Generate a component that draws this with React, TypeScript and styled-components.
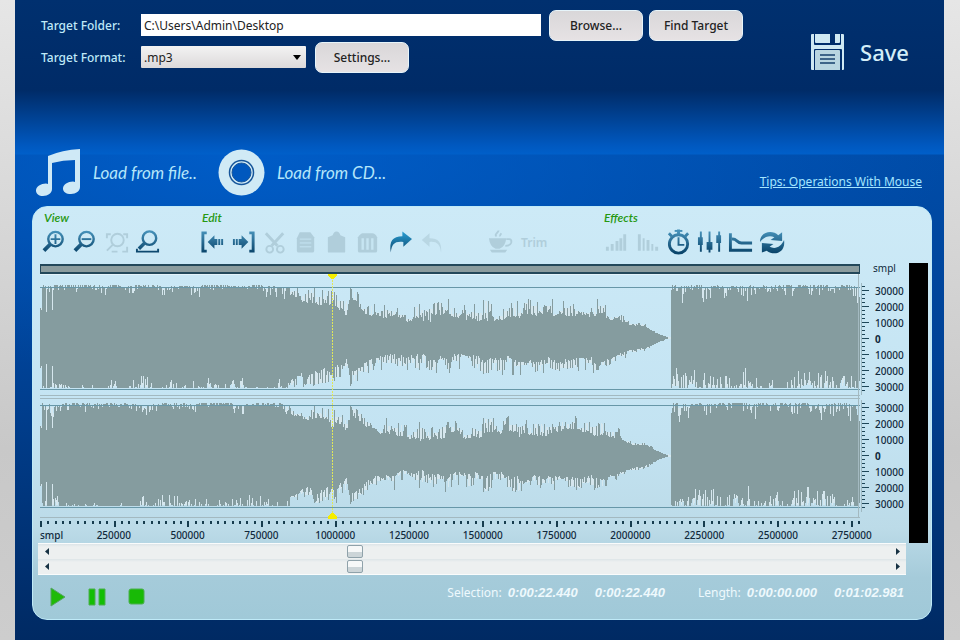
import React from 'react';
import styled, { createGlobalStyle } from 'styled-components';

const GlobalStyle = createGlobalStyle`
  * { box-sizing: border-box; }
  body {
    margin: 0;
    background: linear-gradient(#e6e6e6, #c8c8c8 70%, #cdcdcd);
    font-family: "Noto Sans", "Open Sans", sans-serif;
    font-size: 12px;
    color: #10293c;
  }
  button, input, select { font: inherit; color: inherit; margin: 0; }
  button { border: 0; padding: 0; background: none; cursor: pointer; }
  button:disabled { cursor: default; }
  svg { display: block; }
`;

const Window = styled.main`
  min-height: 100vh;
  margin: 0 16px 0 15px;
  padding: 9px 12px 20px 17px;
  background:
    linear-gradient(#00306f 0, #002b67 90px, #0058bf 145px, #005fc9 154px, transparent 155px),
    radial-gradient(700px 220px at 25% 155px, rgba(0, 98, 210, 0.75), transparent),
    linear-gradient(#004ca8 155px, #004296 360px, #002d6a 600px, #002a63);
`;

const Header = styled.header`
  display: flex;
  justify-content: space-between;
  padding: 0 23px 0 9px;
  height: 139px;
`;

const TargetForm = styled.form`
  display: grid;
  grid-template-columns: 94px 1fr;
  grid-auto-rows: 32px;
  align-items: center;
  flex: 0 1 702px;
  column-gap: 6px;
`;

const Label = styled.label`
  color: #bfe9f8;
  font-weight: 500;
`;

const FieldRow = styled.div`
  display: flex;
  align-items: center;
  gap: 6px;
  min-width: 0;
`;

const FolderInput = styled.input`
  flex: 1;
  min-width: 0;
  height: 22px;
  margin-right: 2px;
  padding: 0 3px;
  border: 0;
  background: #fff;
  color: #222;
`;

const SelectFrame = styled.span`
  display: grid;
  grid-template-areas: "stack";
  align-items: center;
  width: 165px;
  margin-right: 3px;
  svg { grid-area: stack; justify-self: end; margin-right: 5px; pointer-events: none; }
`;

const FormatSelect = styled.select`
  grid-area: stack;
  appearance: none;
  height: 22px;
  padding: 0 3px;
  border: 0;
  border-radius: 1px;
  background: linear-gradient(#f3f3f3, #dcd9da);
  color: #222;
`;

const PushButton = styled.button`
  width: 94px;
  height: 31px;
  border: 1px solid #e6f4fa;
  border-radius: 7px;
  background: linear-gradient(#d9d7d9, #e6e2e4);
  color: #222;
  font-weight: 500;
`;

const SaveButton = styled.button`
  display: flex;
  align-items: center;
  align-self: flex-start;
  gap: 15px;
  margin-top: 24px;
  color: #d3eef8;
  font-size: 22px;
  line-height: 36px;
  font-weight: 500;
`;

const SourceBar = styled.nav`
  display: flex;
  align-items: center;
  height: 48px;
  margin-bottom: 10px;
  padding: 0 10px 0 4px;
`;

const SourceButton = styled.button`
  display: flex;
  align-items: center;
  gap: 12px;
  margin-right: 21px;
  color: #b4e6fa;
  font-family: Lato, "Noto Sans", sans-serif;
  font-size: 17px;
  font-style: italic;
`;

const TipsLink = styled.a`
  margin: 18px 0 0 auto;
  color: #a5e6ff;
`;

const Panel = styled.section`
  padding: 5px 3px 9px 6px;
  border: 1px solid #bfeaf8;
  border-radius: 15px;
  background: linear-gradient(#cdeaf7, #c3e3f2 55%, #bcdbe8 78%, #a5cbda 90%, #a0c9d8);
`;

const Toolbar = styled.div`
  display: flex;
  height: 51px;
`;

const ToolGroup = styled.div<{ $span: number }>`
  flex: ${p => p.$span} 0 0;
  min-width: 0;
`;

const GroupTitle = styled.h2`
  margin: 0 0 0 5px;
  color: #269812;
  font-family: Lato, "Noto Sans", sans-serif;
  font-size: 12px;
  line-height: 12px;
  height: 14px;
  font-style: italic;
  font-weight: 600;
`;

const Tools = styled.div<{ $inset?: number }>`
  display: flex;
  align-items: center;
  height: 32px;
  padding-left: ${p => p.$inset ?? 0}px;
`;

const ToolButton = styled.button`
  display: flex;
  align-items: center;
  justify-content: center;
  gap: 8px;
  min-width: 31px;
  height: 30px;
  font-weight: 600;
  &:disabled { color: #b0cedb; }
`;

const TrimButton = styled(ToolButton)`
  margin-left: 42px;
`;

const Editor = styled.div`
  display: flex;
  justify-content: space-between;
  gap: 3px;
`;

const EditorMain = styled.div`
  flex: 1;
  min-width: 0;
`;

const Meter = styled.div`
  width: 19px;
  height: 280px;
  background: #000;
`;

const Tracks = styled.div`
  display: grid;
  grid-template-columns: 1fr 46px;
  padding-left: 1px;
`;

const Overview = styled.div`
  height: 10px;
  margin: 1px 0 0;
  border: 1px solid #23485a;
  border-width: 2px 1px;
  background: #8b9c9e;
`;

const AxisUnit = styled.span`
  padding-left: 13px;
  font-size: 10px;
  line-height: 11px;
`;

const Waves = styled.div`
  height: 245px;
`;

const Axes = styled.div`
  display: flex;
  flex-direction: column;
  gap: 5px;
  padding-top: 9px;
`;

const Axis = styled.div`
  display: flex;
  gap: 6px;
  height: 112px;
`;

const AxisLabels = styled.ol`
  list-style: none;
  margin: 0;
  padding: 0;
  font-size: 10px;
  line-height: 16px;
  font-weight: 500;
`;

const TimeRuler = styled.div`
  margin-right: 46px;
  height: 24px;
  padding-left: 1px;
`;

const TimeLabels = styled.div`
  display: flex;
  font-size: 10px;
  line-height: 14px;
  font-weight: 500;
`;

const TimeUnit = styled.span`
  flex: 0 0 4.5%;
  min-width: 0;
  white-space: nowrap;
`;

const TimeLabel = styled.span`
  flex: 0 0 9%;
  min-width: 0;
  text-align: center;
  white-space: nowrap;
`;

const Scrollers = styled.div`
  margin-left: -1px;
  height: 32px;
  padding: 1px 0;
  background: #fafcfc;
`;

const Scroller = styled.div`
  display: flex;
  align-items: center;
  height: 15px;
  background: linear-gradient(#dde5e8, #edf0f0 3px, #edf0f0);
`;

const ScrollArrow = styled.button`
  display: flex;
  justify-content: center;
  flex: 0 0 17px;
  color: #173243;
`;

const ScrollRange = styled.input`
  flex: 1;
  min-width: 0;
  height: 15px;
  appearance: none;
  background: none;
  &::-webkit-slider-thumb {
    appearance: none;
    width: 16px;
    height: 13px;
    border: 1px solid #8fa2aa;
    border-radius: 2px;
    background: linear-gradient(#f6f8f8 50%, #ccd5d8 55%);
  }
`;

const Footer = styled.footer`
  display: flex;
  align-items: center;
  justify-content: space-between;
  height: 35px;
  padding: 0 24px 0 11px;
`;

const Transport = styled.div`
  display: flex;
  align-items: center;
  gap: 22px;
  height: 32px;
  padding-top: 8px;
`;

const Status = styled.div`
  display: flex;
  gap: 33px;
  color: #eef9fd;
`;

const StatusItem = styled.div`
  display: flex;
  align-items: baseline;
  white-space: nowrap;
`;

const StatusName = styled.span`
  margin-right: 6px;
  font-size: 12px;
`;

const Timecode = styled.output`
  font-family: "Liberation Sans", Arial, sans-serif;
  font-size: 13px;
  font-weight: 700;
  font-style: italic;
  & + & { margin-left: 17px; }
`;

const FloppyIcon = () => (
  <svg width="35" height="38" viewBox="0 0 35 38" aria-hidden="true">
    <path fill="#cfe9f3" d="M1 2q0-1 1-1h2v10q0 1 1 1h25q1 0 1-1V1h2q1 0 1 1v34q0 1-1 1h-1V17q0-1-1-1H5q-1 0-1 1v20H2q-1 0-1-1z" />
    <path fill="#cfe9f3" d="M5 1h15v9H6q-1 0-1-1zM25 1h5v8q0 1-1 1h-4z" />
    <path fill="#b9d6e1" d="M5 18q0-1 1-1h23q1 0 1 1v19H5z" />
    <path stroke="#16406c" strokeWidth="1.4" d="M10 22h15M10 26h15M10 30h15" />
  </svg>
);

const NoteIcon = () => (
  <svg width="45" height="48" viewBox="0 0 45 48" aria-hidden="true">
    <path fill="#cfe9f6" d="M12 8q14-6 32-7v38c0 4-4 7-9 7-5 0-8-2-8-5.500 0-4 5-7 10-7l2 .5V12q-12 0-23 3v26c0 4-4 7-9 7-4 0-7-2-7-5.500 0-4 5-7 10-7l2 .5z" />
  </svg>
);

const DiscIcon = () => (
  <svg width="47" height="47" viewBox="0 0 47 47" aria-hidden="true">
    <circle cx="23.500" cy="23.500" r="23" fill="#d0eaf5" />
    <circle cx="23.500" cy="23.500" r="12" fill="none" stroke="#15559a" strokeWidth="1.500" />
    <circle cx="23.500" cy="23.500" r="9.500" fill="#0058be" stroke="#15559a" />
  </svg>
);

type IconName =
  | 'zoomIn' | 'zoomOut' | 'zoomSelection' | 'zoomAll' | 'markStart' | 'markEnd' | 'cut' | 'copy'
  | 'paste' | 'delete' | 'redo' | 'undo' | 'cup' | 'fadeIn' | 'fadeOut' | 'timer' | 'mixer' | 'curve' | 'loop';

const lens = (ink: string) => (
  <>
    <circle cx="14" cy="10" r="7.500" fill="#cfeaf5" stroke={ink} strokeWidth="2.500" />
    <path d="M9 15l-7 7" stroke={ink} strokeWidth="4" />
  </>
);

const ICONS: Record<IconName, (ink: string) => React.ReactNode> = {
  zoomIn: ink => <>{lens(ink)}<path fill={ink} d="M13 5h2v4h4v2h-4v4h-2v-4H9V9h4z" /></>,
  zoomOut: ink => <>{lens(ink)}<path fill={ink} d="M9 9h10v2H9z" /></>,
  zoomSelection: ink => (
    <g fill="none" stroke={ink} strokeWidth="2">
      <circle cx="14" cy="11" r="6.500" />
      <path d="M9 16l-6 6M3 9V5h4M20 5h4v4M24 18v5h-5M8 23h6" />
    </g>
  ),
  zoomAll: ink => (
    <g fill="none" stroke={ink}>
      <circle cx="15" cy="9" r="7" strokeWidth="2.500" />
      <path d="M10 14l-6 6" strokeWidth="3.500" />
      <path d="M2 20v3h22v-3" strokeWidth="2" />
    </g>
  ),
  markStart: ink => (
    <>
      <path d="M7 3.500H3v19h4" fill="none" stroke={ink} strokeWidth="3" />
      <path fill={ink} d="M8 13l7-7v4h3v6h-3v4zM19 10h2v6h-2zM22 10h2v6h-2z" />
    </>
  ),
  markEnd: ink => (
    <>
      <path d="M19 3.500h4v19h-4" fill="none" stroke={ink} strokeWidth="3" />
      <path fill={ink} d="M18 13l-7-7v4H8v6h3v4zM5 10h2v6H5zM2 10h2v6H2z" />
    </>
  ),
  cut: ink => (
    <g fill="none" stroke={ink} strokeWidth="2">
      <path d="M4 4l12 13M22 4L10 17" strokeWidth="3" />
      <circle cx="8" cy="20.500" r="3.500" /><circle cx="19" cy="20.500" r="3.500" />
    </g>
  ),
  copy: ink => (
    <>
      <path fill={ink} d="M7 3h11l4 5v14q0 2-2 2H6q-2 0-2-2V9z" />
      <path d="M7 10h12M7 14h12M7 18h12" stroke="#c6e5f2" />
    </>
  ),
  paste: ink => <path fill={ink} d="M4 8l5-2q1-4 4-4t4 4l5 2v15q0 1-1 1H5q-1 0-1-1z" />,
  delete: ink => (
    <>
      <path fill={ink} d="M3 8q3-4 5-4h10q3 0 5 4v14q0 2-2 2H5q-2 0-2-2z" />
      <path d="M8 9v12M13 9v12M18 9v12" stroke="#c6e5f2" strokeWidth="2.500" />
    </>
  ),
  redo: ink => <path fill={ink} d="M5 24C3 12 7 7 17 7V2l10 8-9 8v-5C9 12 6 15 5 24z" />,
  undo: ink => <path fill={ink} opacity=".7" d="M25 24C26 13 22 9 13 9V4L5 11l8 7v-5c7-1 11 2 12 11z" />,
  cup: ink => (
    <>
      <path fill={ink} d="M2 9h18q-1 9-7 11H9Q3 18 2 9zM3 21h18l-2 3H5z" />
      <path d="M20 10h3q3 0 2 4-1 3-6 3M10 7q-2-1 0-3t2-3M14 7q-1-1 1-3" fill="none" stroke={ink} strokeWidth="2" />
    </>
  ),
  fadeIn: ink => <path fill={ink} d="M2 18h3v4H2zM7 15h3v7H7zM12 12h3v10h-3zM16 9h3v13h-3zM20 5h3v17h-3z" />,
  fadeOut: ink => <path fill={ink} d="M3 5h3v17H3zM8 9h2v13H8zM12 11h3v11h-3zM17 15h2v7h-2zM21 18h3v4h-3z" />,
  timer: ink => (
    <g fill="none" stroke={ink}>
      <circle cx="13" cy="15" r="9.500" strokeWidth="3" />
      <path d="M13 8v8h6" strokeWidth="2" />
      <path d="M13 0v5M3 4l3 3M23 4l-3 3" strokeWidth="3" />
      <path d="M9 1.500h8" strokeWidth="2" />
    </g>
  ),
  mixer: ink => (
    <path fill={ink} d="M3 2h2v6h1v8H5v7H3v-7H1V8h2zM12 2h2v11h2v8h-2v3h-2v-3h-2v-8h2zM22 2h2v4h1v8h-1v9h-2v-9h-2V6h2z" />
  ),
  curve: ink => (
    <g fill="none" stroke={ink} strokeWidth="3">
      <path d="M2.500 4v17.500H25" />
      <path d="M4 10c5-1 5 4 10 4h11" />
    </g>
  ),
  loop: ink => (
    <path fill={ink} d="M1 13C1 2 14 0 20 6l4-3v9l-12-1 4-3C11 6 6 7 1 13zM26 11c2 13-10 17-18 11l-5 2V14l12 1-4 3c6 3 12 0 15-7z" />
  ),
};

const ToolIcon = ({ name, muted }: { name: IconName; muted?: boolean }) => (
  <svg width="26" height="26" viewBox="0 0 27 26" aria-hidden="true">
    <defs>
      <linearGradient id={`ink-${name}`} gradientUnits="userSpaceOnUse" x1="0" y1="2" x2="0" y2="24">
        <stop offset="0" stopColor={name === 'redo' ? '#2b9fd4' : '#4590b8'} />
        <stop offset="1" stopColor="#0a456b" />
      </linearGradient>
    </defs>
    {ICONS[name](muted ? 'currentColor' : `url(#ink-${name})`)}
  </svg>
);

type Tool = { icon: IconName; label: string; disabled?: boolean };

const VIEW_TOOLS: Tool[] = [
  { icon: 'zoomIn', label: 'Zoom in' },
  { icon: 'zoomOut', label: 'Zoom out' },
  { icon: 'zoomSelection', label: 'Zoom to selection', disabled: true },
  { icon: 'zoomAll', label: 'Show all' },
];

const EDIT_TOOLS: Tool[] = [
  { icon: 'markStart', label: 'Selection start' },
  { icon: 'markEnd', label: 'Selection end' },
  { icon: 'cut', label: 'Cut', disabled: true },
  { icon: 'copy', label: 'Copy', disabled: true },
  { icon: 'paste', label: 'Paste', disabled: true },
  { icon: 'delete', label: 'Delete', disabled: true },
  { icon: 'redo', label: 'Redo' },
  { icon: 'undo', label: 'Undo', disabled: true },
];

const EFFECT_TOOLS: Tool[] = [
  { icon: 'fadeIn', label: 'Fade in', disabled: true },
  { icon: 'fadeOut', label: 'Fade out', disabled: true },
  { icon: 'timer', label: 'Tempo' },
  { icon: 'mixer', label: 'Equalizer' },
  { icon: 'curve', label: 'Envelope' },
  { icon: 'loop', label: 'Reverse' },
];

const ToolButtons = ({ tools }: { tools: Tool[] }) => (
  <>
    {tools.map(t => (
      <ToolButton key={t.icon} type="button" aria-label={t.label} disabled={t.disabled}>
        <ToolIcon name={t.icon} muted={t.disabled} />
      </ToolButton>
    ))}
  </>
);

/* Envelope key points: x, solid level, extra height of the peaks. */
const ENVELOPE: [number, number, number][] = [
  [0, 41, 12], [240, 43, 10], [252, 41, 10], [265, 34, 16], [280, 30, 20], [295, 28, 22], [302, 25, 19], [306, 22, 6],
  [308, 32, 17], [313, 36, 12], [325, 24, 16], [345, 18, 18], [370, 14, 18], [400, 17, 19], [450, 17, 19], [490, 19, 20],
  [530, 22, 16], [560, 20, 17], [576, 17, 11], [590, 11, 6], [605, 10, 4], [618, 4, 1], [629, 0, 0],
  [630, 0, 0], [631, 41, 12], [820, 41, 12],
];

const SPIKES: Record<number, number> = {
  0: 30, 1: 28, 6: 26, 12: 28,
  274: 50, 282: 48, 288: 47, 294: 46, 310: 51, 311: 49, 317: 46, 379: 34, 443: 38, 448: 37, 451: 34, 530: 32,
};

const envelopeAt = (x: number) => {
  const i = Math.max(1, ENVELOPE.findIndex(p => p[0] >= x));
  const [x0, a0, b0] = ENVELOPE[i - 1];
  const [x1, a1, b1] = ENVELOPE[i];
  const t = (x - x0) / (x1 - x0);
  return [a0 + (a1 - a0) * t, b0 + (b1 - b0) * t];
};

const WIDTH = 820;

const levels = (random: () => number, lower: boolean) => {
  let drift = 0.5;
  return Array.from({ length: WIDTH }, (_, x) => {
    const [solid, peak] = envelopeAt(x);
    const loud = x < 250 || x > 630;
    const depth = x > 630 ? 1.5 : 1;
    drift = Math.min(1, Math.max(0, drift + (random() - 0.5) * 0.7));
    const r = random();
    const shape = loud
      ? 1.05 - Math.pow(r, lower ? 2 : 3) * (0.3 + 0.9 * drift) * depth - 0.2 * drift
      : 0.35 * drift + 0.85 * Math.pow(r, 3);
    const value = SPIKES[x] ?? solid + peak * shape;
    return Math.min(lower ? 50 : 53, Math.round(value * (lower && !loud ? 0.94 : 1)));
  });
};

/* Widens every level to its neighbours' maximum, which closes the narrow notches. */
const halo = (values: number[]) =>
  values.map((v, x) => Math.min(49, Math.max(v, Math.min(
    Math.max(...values.slice(Math.max(0, x - 3), x + 1)),
    Math.max(...values.slice(x, x + 4)),
  ))));

const outline = (center: number, up: number[], down: number[]) => {
  const top = up.map((v, x) => `L${x} ${center - v}H${x + 1}`);
  const bottom = down.map((v, x) => `L${x + 1} ${center + v}H${x}`).reverse();
  return `M0 ${center}${top.join('')}${bottom.join('')}Z`;
};

const makeWave = (center: number, seed: number) => {
  let state = seed;
  const random = () => {
    state = (state * 1664525 + 1013904223) % 4294967296;
    return state / 4294967296;
  };
  const up = levels(random, false);
  const down = levels(random, true);
  return { body: outline(center, up, down), glow: outline(center, halo(up), halo(down)) };
};

const WAVES = [makeWave(64, 7), makeWave(182, 93)];

const Waveform = () => (
  <svg width="100%" height="245" viewBox="0 0 820 245" preserveAspectRatio="none" role="img" aria-label="Stereo waveform" shapeRendering="crispEdges">
    <path fill="#e3f3fa" d="M0 0h820v1H0z" />
    {WAVES.map((w, i) => (
      <g key={i}>
        <path d={w.glow} fill="#d6e7ee" />
        <path d={w.body} fill="#859c9f" />
      </g>
    ))}
    <path stroke="#6797a8" d="M0 13.500h820M0 115.500h820M0 131.500h820M0 233.500h820" />
    <path stroke="#a3b9c0" d="M0 121.500h820M0 124.500h820M0 243.500h820M818.500 0v244" />
    <path stroke="#dfe75a" strokeDasharray="2 1" d="M292.500 0v244" />
    <path fill="#f6ed00" d="M288 0h9v2l-4 3h-1l-4-3zM288 245v-3l4-3h1l4 3v3z" />
  </svg>
);

const AxisTicks = () => (
  <svg width="9" height="112" viewBox="0 0 9 112" shapeRendering="crispEdges" aria-hidden="true">
    <path stroke="#9fb9c2" d="M1.500 0v112" />
    {Array.from({ length: 27 }, (_, i) => (
      <path key={i} stroke="#1d4658" d={`M2 ${4 * i + 3}.500h${i % 4 === 1 ? 7 : 3}`} />
    ))}
  </svg>
);

const LEVELS = ['30000', '20000', '10000', '0', '10000', '20000', '30000'];

const LevelAxis = () => (
  <Axis>
    <AxisTicks />
    <AxisLabels>{LEVELS.map((v, i) => <li key={i}>{v === '0' ? <b>0</b> : v}</li>)}</AxisLabels>
  </Axis>
);

const TimeTicks = () => (
  <svg width="100%" height="9" viewBox="0 0 820 9" preserveAspectRatio="none" aria-hidden="true">
    {Array.from({ length: 112 }, (_, i) => (
      <path key={i} stroke="#173c4e" strokeWidth="2" d={`M${Math.round(i * 7.37) + 1} 2v${i % 10 ? 3 : 6}`} />
    ))}
  </svg>
);

const TIMES = Array.from({ length: 11 }, (_, i) => (i + 1) * 250000);

const ScrollRow = ({ label }: { label: string }) => (
  <Scroller>
    <ScrollArrow type="button" aria-label={`${label} left`}>
      <svg width="4" height="7" viewBox="0 0 4 7"><path fill="currentColor" d="M4 0v7L0 3.500z" /></svg>
    </ScrollArrow>
    <ScrollRange type="range" aria-label={label} min={0} max={1000} defaultValue={357} />
    <ScrollArrow type="button" aria-label={`${label} right`}>
      <svg width="4" height="7" viewBox="0 0 4 7"><path fill="currentColor" d="M0 0v7l4-3.500z" /></svg>
    </ScrollArrow>
  </Scroller>
);

export default function App() {
  return (
    <>
      <GlobalStyle />
      <Window>
        <Header>
          <TargetForm onSubmit={e => e.preventDefault()}>
            <Label htmlFor="folder">Target Folder:</Label>
            <FieldRow>
              <FolderInput id="folder" type="text" defaultValue="C:\Users\Admin\Desktop" />
              <PushButton type="button">Browse...</PushButton>
              <PushButton type="button">Find Target</PushButton>
            </FieldRow>
            <Label htmlFor="format">Target Format:</Label>
            <FieldRow>
              <SelectFrame>
                <FormatSelect id="format" defaultValue=".mp3">
                  <option>.mp3</option>
                </FormatSelect>
                <svg width="8" height="5" viewBox="0 0 8 5" aria-hidden="true"><path d="M0 0h8L4 5z" /></svg>
              </SelectFrame>
              <PushButton type="button">Settings...</PushButton>
            </FieldRow>
          </TargetForm>
          <SaveButton type="button"><FloppyIcon />Save</SaveButton>
        </Header>

        <SourceBar>
          <SourceButton type="button"><NoteIcon />Load from file..</SourceButton>
          <SourceButton type="button"><DiscIcon />Load from CD...</SourceButton>
          <TipsLink href="#tips">Tips: Operations With Mouse</TipsLink>
        </SourceBar>

        <Panel>
          <Toolbar>
            <ToolGroup $span={158}>
              <GroupTitle>View</GroupTitle>
              <Tools><ToolButtons tools={VIEW_TOOLS} /></Tools>
            </ToolGroup>
            <ToolGroup $span={402}>
              <GroupTitle>Edit</GroupTitle>
              <Tools>
                <ToolButtons tools={EDIT_TOOLS} />
                <TrimButton type="button" disabled><ToolIcon name="cup" muted />Trim</TrimButton>
              </Tools>
            </ToolGroup>
            <ToolGroup $span={329}>
              <GroupTitle>Effects</GroupTitle>
              <Tools $inset={2}><ToolButtons tools={EFFECT_TOOLS} /></Tools>
            </ToolGroup>
          </Toolbar>

          <Editor>
            <EditorMain>
              <Tracks>
                <Overview />
                <AxisUnit>smpl</AxisUnit>
                <Waves><Waveform /></Waves>
                <Axes><LevelAxis /><LevelAxis /></Axes>
              </Tracks>
              <TimeRuler>
                <TimeTicks />
                <TimeLabels>
                  <TimeUnit>smpl</TimeUnit>
                  {TIMES.map(t => <TimeLabel key={t}>{t}</TimeLabel>)}
                </TimeLabels>
              </TimeRuler>
              <Scrollers>
                <ScrollRow label="Scroll" />
                <ScrollRow label="Zoom" />
              </Scrollers>
            </EditorMain>
            <Meter role="img" aria-label="Level meter" />
          </Editor>

          <Footer>
            <Transport>
              <button type="button" aria-label="Play">
                <svg width="16" height="20" viewBox="0 0 16 20"><path fill="#1fba08" stroke="#55a365" d="M1 1l14 9-14 9z" /></svg>
              </button>
              <button type="button" aria-label="Pause">
                <svg width="18" height="18" viewBox="0 0 18 18"><path fill="#12be04" stroke="#4cae50" d="M1 1h6v16H1zM11 1h6v16h-6z" /></svg>
              </button>
              <button type="button" aria-label="Stop">
                <svg width="17" height="17" viewBox="0 0 17 17"><rect x="1" y="1" width="15" height="15" rx="2" fill="#18ba06" stroke="#4cae50" /></svg>
              </button>
            </Transport>
            <Status>
              <StatusItem>
                <StatusName>Selection:</StatusName>
                <Timecode>0:00:22.440</Timecode>
                <Timecode>0:00:22.440</Timecode>
              </StatusItem>
              <StatusItem>
                <StatusName>Length:</StatusName>
                <Timecode>0:00:00.000</Timecode>
                <Timecode>0:01:02.981</Timecode>
              </StatusItem>
            </Status>
          </Footer>
        </Panel>
      </Window>
    </>
  );
}
